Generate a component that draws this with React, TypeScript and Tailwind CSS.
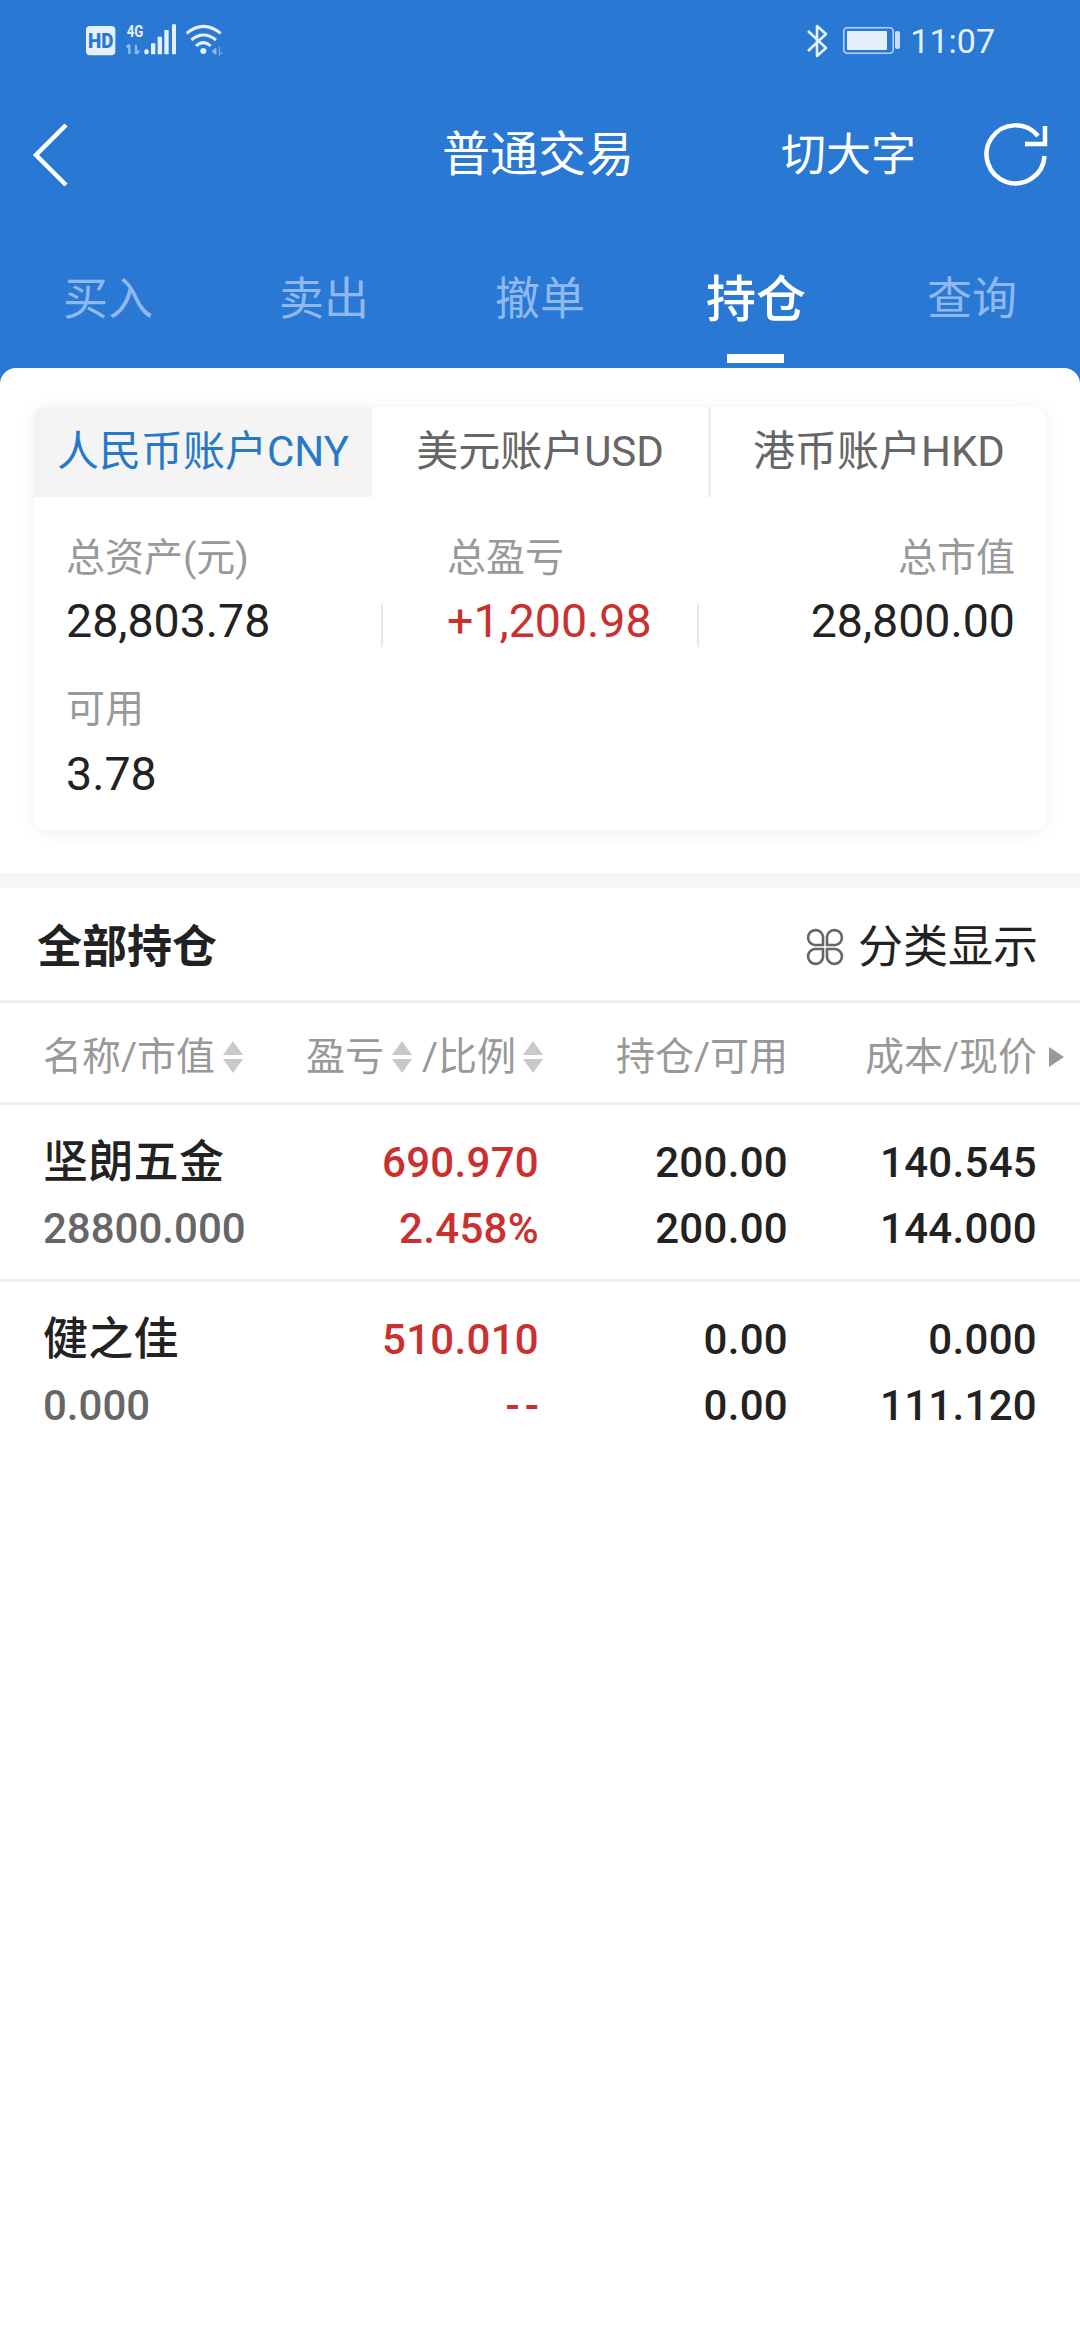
import React from "react";

const FONT = "font-['Roboto','Noto_Sans_CJK_SC',sans-serif]";

function StatusLeft() {
  return (
    <svg width="160" height="50" viewBox="0 0 480 150">
      <rect x="30" y="30" width="88" height="88" rx="12" fill="#e6f0fb" />
      <text x="36" y="95" fontFamily="Roboto" fontWeight="900" fontSize="60" fill="#2878d4" textLength="76" lengthAdjust="spacingAndGlyphs">HD</text>
      <text x="152" y="62" fontFamily="Roboto" fontWeight="700" fontSize="48" fill="#e6f0fb" textLength="50" lengthAdjust="spacingAndGlyphs">4G</text>
      <path d="M160 114V86M160 86l-8 8M180 86v28M180 114l10-10" stroke="#8db8ee" strokeWidth="7" fill="none" />
      <rect x="205" y="100" width="13" height="15" rx="5" fill="#e6f0fb" />
      <rect x="225" y="82" width="13" height="33" rx="2" fill="#e6f0fb" />
      <rect x="245" y="62" width="13" height="53" rx="2" fill="#e6f0fb" />
      <rect x="265" y="42" width="13" height="73" rx="2" fill="#e6f0fb" />
      <rect x="288" y="25" width="12" height="90" rx="2" fill="#e6f0fb" />
      <path d="M332 52Q382 10 434 52M346 72Q382 42 420 72M360 90Q382 70 404 90" stroke="#e6f0fb" strokeWidth="9" fill="none" />
      <circle cx="382" cy="105" r="9" fill="#e6f0fb" />
      <path d="M420 97l-12 9 12 9zM430 92v26M430 118l10-10" fill="#8db8ee" stroke="#8db8ee" strokeWidth="3" />
    </svg>
  );
}

function StatusRight() {
  return (
    <svg width="108" height="50" viewBox="0 0 108 50">
      <path d="M13 15l18 17-9 8V10l9 8-18 17" stroke="#e6f0fb" strokeWidth="2.6" fill="none" strokeLinejoin="round" />
      <rect x="48.8" y="11.8" width="49.4" height="25.4" rx="3.5" stroke="#b9d4f3" strokeWidth="1.6" fill="none" />
      <rect x="52" y="15" width="40" height="19" rx="1" fill="#e6f0fb" />
      <rect x="100" y="15" width="5" height="18" rx="2" fill="#c9def6" />
    </svg>
  );
}

function Refresh() {
  return (
    <svg width="70" height="70" viewBox="0 0 70 70" fill="none" stroke="#fff" strokeWidth="4.5">
      <path d="M63.5 36A29 29 0 1 1 57 16" />
      <path d="M44 24H64V6" />
    </svg>
  );
}

function Sort() {
  return (
    <svg width="20" height="36" viewBox="0 0 20 36" fill="#c9c9c9">
      <path d="M10 2l10 14H0z" />
      <path d="M10 34L0 20h20z" />
    </svg>
  );
}

function TopTab({ label, active }: { label: string; active?: boolean }) {
  return (
    <div className={`relative flex items-center justify-center pt-[4px] ${active ? "text-[50px] font-medium text-white" : "text-[45px] text-[#8fb9ee]"}`}>
      {label}
      {active && <div className="absolute bottom-[5px] left-[79px] h-[9px] w-[57px] bg-white" />}
    </div>
  );
}

const rows = [
  ["坚朗五金", "690.970", "200.00", "140.545", "28800.000", "2.458%", "200.00", "144.000"],
  ["健之佳", "510.010", "0.00", "0.000", "0.000", "--", "0.00", "111.120"],
];

export default function App() {
  return (
    <div className={`flex h-[2340px] w-[1080px] flex-col overflow-hidden bg-[#2878d4] ${FONT}`}>
      <div className="flex h-[82px] items-center pl-[76px] pr-[85px]">
        <StatusLeft />
        <div className="ml-auto flex items-center">
          <StatusRight />
          <span className="ml-[7px] text-[34px] leading-none text-[#e6f0fb]">11:07</span>
        </div>
      </div>

      <div className="relative flex h-[146px] items-center text-white">
        <svg className="ml-[30px]" width="42" height="66" viewBox="0 0 42 66" fill="none" stroke="#fff" strokeWidth="4.5">
          <path d="M36 3L6 33l30 30" />
        </svg>
        <div className="ml-[370px] w-[192px] whitespace-nowrap text-[48px] leading-none">普通交易</div>
        <div className="ml-[147px] w-[135px] whitespace-nowrap text-[45px] leading-none">切大字</div>
        <div className="ml-[65px]">
          <Refresh />
        </div>
      </div>

      <div className="grid h-[140px] grid-cols-5">
        <TopTab label="买入" />
        <TopTab label="卖出" />
        <TopTab label="撤单" />
        <TopTab label="持仓" active />
        <TopTab label="查询" />
      </div>

      <div className="flex-1 rounded-t-[16px] bg-white">
        <div className="px-[34px] pb-[43px] pt-[39px]">
          <div className="h-[423px] rounded-[14px] bg-white shadow-[0_2px_18px_rgba(0,0,0,0.07)]">
            <div className="grid h-[90px] grid-cols-[338px_339px_336px] text-[42px] leading-none">
              <div className="flex items-center justify-center rounded-tl-[10px] bg-[#f4f4f4] text-[#2878c8]">人民币账户CNY</div>
              <div className="flex items-center justify-center border-r-[3px] border-[#eeeeee] text-[#666666]">美元账户USD</div>
              <div className="flex items-center justify-center text-[#666666]">港币账户HKD</div>
            </div>

            <div className="pl-[32px] pr-[31px] pt-[32px]">
              <div className="grid h-[50px] grid-cols-[381px_1fr_auto] items-center text-[39px] text-[#999999]">
                <div>总资产(元)</div>
                <div>总盈亏</div>
                <div>总市值</div>
              </div>
              <div className="mt-[14px] flex h-[56px] items-center text-[46.5px] leading-none text-[#222222]">
                <div className="w-[315px]">28,803.78</div>
                <div className="mt-[8px] h-[44px] w-[2px] bg-[#e8e8e8]" />
                <div className="ml-[64px] w-[250px] text-[#c9302f]">+1,200.98</div>
                <div className="mt-[8px] h-[44px] w-[2px] bg-[#e8e8e8]" />
                <div className="flex-1 text-right">28,800.00</div>
              </div>
              <div className="mt-[35px] h-[50px] text-[39px] leading-[50px] text-[#999999]">可用</div>
              <div className="mt-[12px] h-[56px] text-[46.5px] leading-[56px] text-[#222222]">3.78</div>
            </div>
          </div>
        </div>

        <div className="h-[15px] bg-[#f5f6f8]" />

        <div className="flex h-[115px] items-center border-b-[3px] border-[#eeeeee] pl-[37px] pr-[42px] pt-[6px]">
          <div className="text-[45px] font-bold leading-none text-[#222222]">全部持仓</div>
          <div className="ml-auto flex items-center text-[45px] leading-none text-[#222222]">
            <svg className="mr-[13px]" width="40" height="40" viewBox="0 0 40 40" fill="none" stroke="#666" strokeWidth="2.6">
              <path d="M18 18H9.5A7.5 7.5 0 1 1 18 9.5ZM22 18V9.5A7.5 7.5 0 1 1 30.5 18ZM18 22V30.5A7.5 7.5 0 1 1 9.5 22ZM22 22H30.5A7.5 7.5 0 1 1 22 30.5Z" />
            </svg>
            分类显示
          </div>
        </div>

        <div className="grid h-[102px] grid-cols-[200px_296px_249px_249px] items-center border-b-[3px] border-[#eeeeee] px-[43px] pt-[9px] text-[39px] leading-none text-[#999999]">
          <div className="flex items-center gap-[8px] whitespace-nowrap">
            名称/市值
            <Sort />
          </div>
          <div className="-mr-[4px] flex items-center justify-end whitespace-nowrap">
            盈亏
            <span className="ml-[8px] mr-[10px]"><Sort /></span>
            /比例
            <span className="ml-[7px]"><Sort /></span>
          </div>
          <div className="text-right">持仓/可用</div>
          <div className="-mr-[27px] flex items-center justify-end gap-[12px] whitespace-nowrap">
            成本/现价
            <svg width="15" height="20" viewBox="0 0 15 20" fill="#999">
              <path d="M0 0l15 10L0 20z" />
            </svg>
          </div>
        </div>

        {rows.map((r) => (
          <div key={r[0]} className="grid h-[177px] grid-cols-[200px_296px_249px_249px] content-start border-b-[3px] border-[#eeeeee] px-[43px] pt-[28px] text-[42px] font-medium leading-[60px] tracking-[0.3px] last:border-b-0">
            <div className="whitespace-nowrap text-[45px] text-[#222222]">{r[0]}</div>
            <div className="text-right text-[#c9302f]">{r[1]}</div>
            <div className="text-right text-[#222222]">{r[2]}</div>
            <div className="text-right text-[#222222]">{r[3]}</div>
            <div className="mt-[6px] whitespace-nowrap tracking-normal text-[#666666]">{r[4]}</div>
            <div className={`mt-[6px] text-right text-[#c9302f] ${r[5] === "--" ? "-mr-[5px] tracking-[5px]" : ""}`}>{r[5]}</div>
            <div className="mt-[6px] text-right text-[#222222]">{r[6]}</div>
            <div className="mt-[6px] text-right text-[#222222]">{r[7]}</div>
          </div>
        ))}
      </div>
    </div>
  );
}
